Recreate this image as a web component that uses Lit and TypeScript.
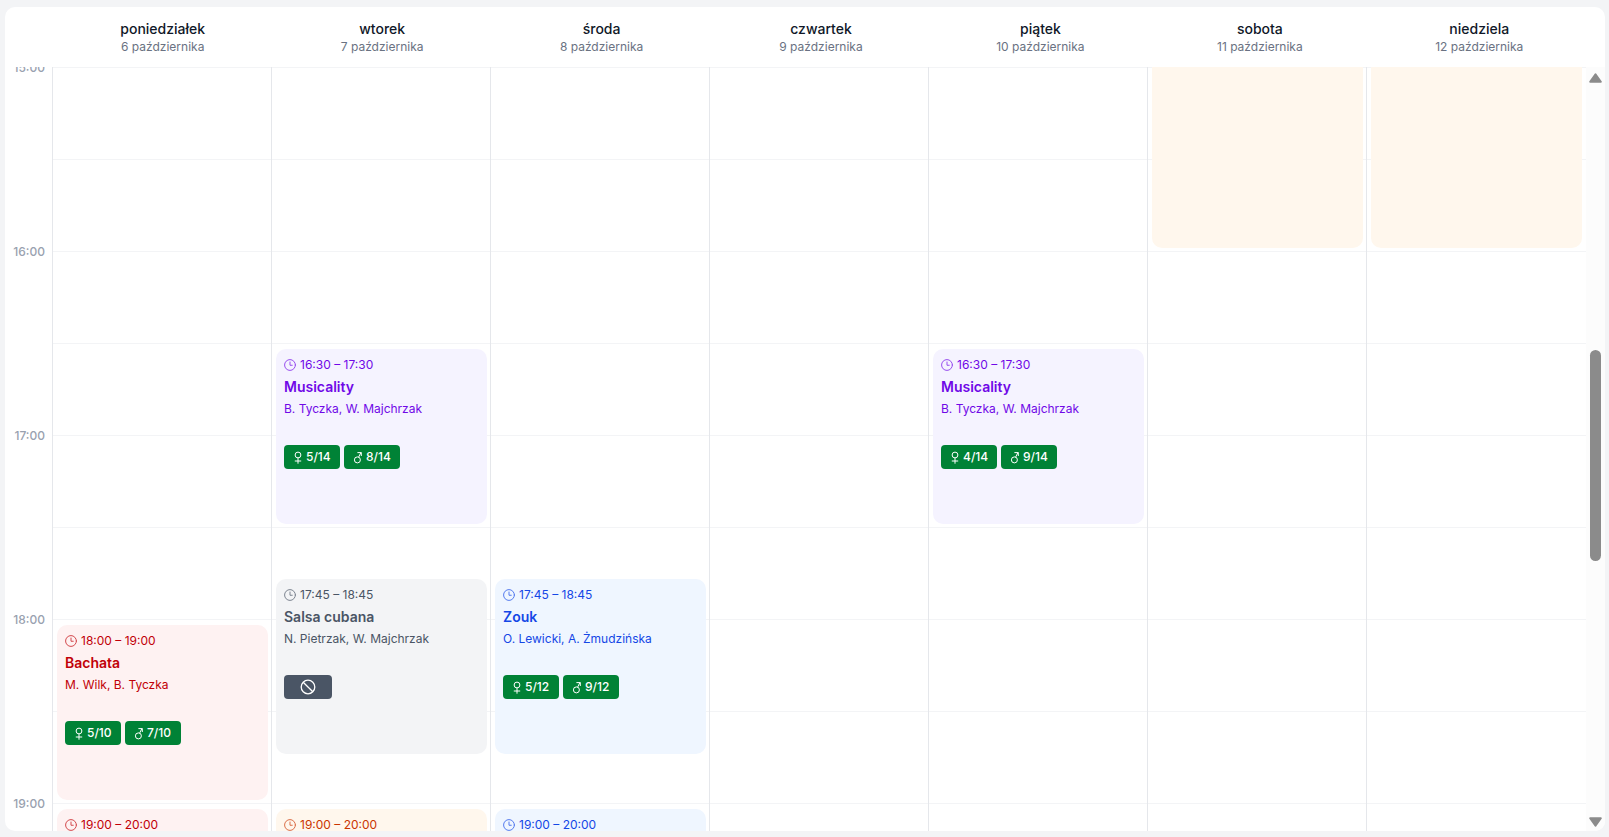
import { LitElement, html, css, svg, nothing } from "lit";
import { customElement, property, query, state } from "lit/decorators.js";
import { classMap } from "lit/directives/class-map.js";
import { styleMap } from "lit/directives/style-map.js";

type Tone = "red" | "violet" | "gray" | "blue" | "orange";

interface Lesson {
  start: string;
  end: string;
  tone: Tone;
  title?: string;
  teachers?: string;
  women?: string;
  men?: string;
  cancelled?: boolean;
}

interface Day {
  name: string;
  date: string;
  lessons: Lesson[];
}

const FIRST_HOUR = 10;
const LAST_HOUR = 24;
const HOUR_HEIGHT = 184;
const OPENING_HOUR = 15;

const HOURS = Array.from({ length: LAST_HOUR - FIRST_HOUR }, (_, i) => FIRST_HOUR + i);

const DAYS: Day[] = [
  {
    name: "poniedziałek",
    date: "6 października",
    lessons: [
      { start: "18:00", end: "19:00", title: "Bachata", teachers: "M. Wilk, B. Tyczka", tone: "red", women: "5/10", men: "7/10" },
      { start: "19:00", end: "20:00", tone: "red" },
    ],
  },
  {
    name: "wtorek",
    date: "7 października",
    lessons: [
      { start: "16:30", end: "17:30", title: "Musicality", teachers: "B. Tyczka, W. Majchrzak", tone: "violet", women: "5/14", men: "8/14" },
      { start: "17:45", end: "18:45", title: "Salsa cubana", teachers: "N. Pietrzak, W. Majchrzak", tone: "gray", cancelled: true },
      { start: "19:00", end: "20:00", tone: "orange" },
    ],
  },
  {
    name: "środa",
    date: "8 października",
    lessons: [
      { start: "17:45", end: "18:45", title: "Zouk", teachers: "O. Lewicki, A. Żmudzińska", tone: "blue", women: "5/12", men: "9/12" },
      { start: "19:00", end: "20:00", tone: "blue" },
    ],
  },
  { name: "czwartek", date: "9 października", lessons: [] },
  {
    name: "piątek",
    date: "10 października",
    lessons: [
      { start: "16:30", end: "17:30", title: "Musicality", teachers: "B. Tyczka, W. Majchrzak", tone: "violet", women: "4/14", men: "9/14" },
    ],
  },
  { name: "sobota", date: "11 października", lessons: [{ start: "13:00", end: "16:00", tone: "orange" }] },
  { name: "niedziela", date: "12 października", lessons: [{ start: "13:00", end: "16:00", tone: "orange" }] },
];

/** Quarters of an hour between the first hour of the grid and a clock time. */
const quartersTo = (time: string): number => {
  const [h, m] = time.split(":").map(Number);
  return (h - FIRST_HOUR) * 4 + m / 15;
};

const female = svg`<circle cx="4" cy="5" r="2.9"/><path d="M4 7.9V13.7M0.8 11H7.2"/>`;
const male = svg`<circle cx="3.4" cy="9.9" r="3"/><path d="M4.6 7.2L7 2.4M3.4 2.6H7.3V6"/>`;

@customElement("lesson-card")
export class LessonCard extends LitElement {
  @property({ attribute: false }) lesson!: Lesson;
  /** False while the top of the card is scrolled out of view. */
  @property({ type: Boolean }) detailed = true;

  static styles = css`
    :host {
      display: block;
      min-width: 0;
    }
    .card {
      box-sizing: border-box;
      height: 100%;
      display: flex;
      flex-direction: column;
      gap: 4px;
      padding: 8px;
      border-radius: 10px;
      overflow: hidden;
    }
    .red { background: #fef2f2; color: #c10007; }
    .violet { background: #f5f3ff; color: #7008e7; }
    .gray { background: #f3f4f6; color: #4a5565; }
    .blue { background: #eff6ff; color: #1447e6; }
    .orange { background: #fff7ed; color: #ca3500; }
    .time {
      display: flex;
      align-items: center;
      gap: 4px;
      font-size: 12px;
      line-height: 16px;
    }
    .clock {
      width: 12px;
      height: 12px;
      flex: none;
      opacity: 0.7;
    }
    .title {
      margin: 0;
      font-size: 14px;
      line-height: 20px;
      font-weight: 600;
    }
    .teachers {
      margin: 0;
      font-size: 12px;
      line-height: 16px;
    }
    .badges {
      display: flex;
      gap: 4px;
      margin-top: 24px;
    }
    .badge {
      box-sizing: border-box;
      display: flex;
      align-items: center;
      gap: 4px;
      min-width: 56px;
      height: 24px;
      padding: 0 8px 0 10px;
      border-radius: 4px;
      background: #008236;
      color: #fff;
      font-size: 12px;
      line-height: 16px;
      font-weight: 500;
    }
    .closed {
      min-width: 48px;
      padding: 0 8px;
      justify-content: center;
      background: #4a5565;
    }
    .sex {
      width: 8px;
      height: 14px;
      flex: none;
    }
    .ban {
      width: 16px;
      height: 16px;
    }
  `;

  private badge(icon: unknown, label: string, count?: string) {
    if (!count) return nothing;
    return html`<span class="badge">
      <svg class="sex" viewBox="0 0 8 14" fill="none" stroke="currentColor" role="img" aria-label=${label}>${icon}</svg>
      <span>${count}</span>
    </span>`;
  }

  private details() {
    const l = this.lesson;
    return html`
      <div class="time">
        <svg class="clock" viewBox="0 0 24 24" fill="none" stroke="currentColor" stroke-width="2" stroke-linecap="round" stroke-linejoin="round" aria-hidden="true">
          <circle cx="12" cy="12" r="10.8" /><path d="M12 6v6.5h4.5" />
        </svg>
        <span>${l.start} – ${l.end}</span>
      </div>
      ${l.title ? html`<h3 class="title">${l.title}</h3>` : nothing}
      ${l.teachers ? html`<p class="teachers">${l.teachers}</p>` : nothing}
      <div class="badges">
        ${l.cancelled
          ? html`<span class="badge closed">
              <svg class="ban" viewBox="0 0 16 16" fill="none" stroke="currentColor" stroke-width="1.3" role="img" aria-label="Odwołane">
                <circle cx="8" cy="8" r="6.8" /><path d="M3.2 3.2L12.8 12.8" />
              </svg>
            </span>`
          : html`${this.badge(female, "Kobiety", l.women)}${this.badge(male, "Mężczyźni", l.men)}`}
      </div>
    `;
  }

  render() {
    return html`<article class=${classMap({ card: true, [this.lesson.tone]: true })}>
      ${this.detailed ? this.details() : nothing}
    </article>`;
  }
}

@customElement("app-root")
export class AppRoot extends LitElement {
  @query(".viewport") private viewport!: HTMLElement;
  @state() private before = (OPENING_HOUR - FIRST_HOUR) * HOUR_HEIGHT;
  @state() private visible = 764;
  @state() private after = 892;

  private readonly onResize = () => this.measure();

  static styles = css`
    :host {
      box-sizing: border-box;
      display: block;
      height: 100vh;
      padding: 7px 4px 6px 5px;
      background: #f3f4f6;
      font-family: Inter, "Liberation Sans", sans-serif;
      color: #101828;
    }
    .calendar {
      height: 100%;
      display: flex;
      flex-direction: column;
      background: #fff;
      border-radius: 10px;
      overflow: hidden;
    }
    .head {
      display: grid;
      grid-template-columns: repeat(7, minmax(0, 1fr));
      padding: 12px 16px 12px 48px;
      text-align: center;
    }
    .day-name {
      margin: 0;
      font-size: 14px;
      line-height: 20px;
      font-weight: 500;
    }
    .day-date {
      margin: 0;
      font-size: 12px;
      line-height: 16px;
      color: #6a7282;
    }
    .body {
      flex: 1;
      min-height: 0;
      display: flex;
    }
    .viewport {
      flex: 1;
      min-width: 0;
      display: flex;
      align-items: flex-start;
      overflow-y: auto;
      scrollbar-width: none;
    }
    .hours {
      box-sizing: border-box;
      width: 47px;
      flex: none;
      padding-right: 7px;
      text-align: right;
      font-size: 12px;
      line-height: 16px;
      font-weight: 500;
      color: #99a1af;
    }
    .hour {
      height: 184px;
      display: flow-root;
    }
    .hour-label {
      display: block;
      margin-top: -7px;
    }
    .week {
      flex: 1;
      min-width: 0;
      display: grid;
      grid-template-columns: repeat(7, minmax(0, 1fr));
      padding-right: 1px;
      background: repeating-linear-gradient(#f3f4f6 0 1px, transparent 1px 92px);
    }
    .day {
      display: grid;
      grid-template-columns: minmax(0, 1fr);
      grid-template-rows: repeat(56, 46px);
      border-left: 1px solid #e5e7eb;
    }
    .lesson {
      margin: 6px 3px 3px 4px;
    }
    .scrollbar {
      width: 19px;
      flex: none;
      display: flex;
      flex-direction: column;
      align-items: center;
      background: #fcfcfc;
    }
    .arrow {
      width: 19px;
      height: 29px;
      flex: none;
      display: flex;
      justify-content: center;
      align-items: flex-start;
      border: 0;
      padding: 6px 0 4px;
      background: none;
      color: #8b8b8b;
    }
    .down {
      height: 24px;
      align-items: flex-end;
    }
    .triangle {
      width: 13px;
      height: 10px;
      display: block;
    }
    .track {
      flex: 1;
      min-height: 0;
      display: flex;
      flex-direction: column;
    }
    .thumb {
      width: 11px;
      border-radius: 6px;
      background: #8b8b8b;
    }
  `;

  connectedCallback() {
    super.connectedCallback();
    window.addEventListener("resize", this.onResize);
  }

  disconnectedCallback() {
    window.removeEventListener("resize", this.onResize);
    super.disconnectedCallback();
  }

  async firstUpdated() {
    this.viewport.scrollTop = (OPENING_HOUR - FIRST_HOUR) * HOUR_HEIGHT;
    await Promise.resolve();
    this.measure();
  }

  private measure() {
    const v = this.viewport;
    this.before = v.scrollTop;
    this.visible = v.clientHeight;
    this.after = Math.max(0, v.scrollHeight - v.clientHeight - v.scrollTop);
  }

  private scrollHours(step: number) {
    this.viewport.scrollBy({ top: step * HOUR_HEIGHT });
  }

  /** Whether a text that starts this many quarters down the grid is in view. */
  private inView(quarters: number): boolean {
    const y = (quarters * HOUR_HEIGHT) / 4;
    return y > this.before - HOUR_HEIGHT / 2 && y < this.before + this.visible;
  }

  render() {
    return html`
      <main class="calendar">
        <header class="head">
          ${DAYS.map(
            (d) => html`<div>
              <h2 class="day-name">${d.name}</h2>
              <p class="day-date">${d.date}</p>
            </div>`
          )}
        </header>
        <div class="body">
          <div class="viewport" @scroll=${this.measure}>
            <div class="hours">
              ${HOURS.map(
                (h, i) => html`<div class="hour">
                  ${this.inView(i * 4) ? html`<span class="hour-label">${h}:00</span>` : nothing}
                </div>`
              )}
            </div>
            <div class="week">
              ${DAYS.map(
                (d) => html`<section class="day" aria-label=${d.name}>
                  ${d.lessons.map(
                    (l) => html`<lesson-card
                      class="lesson"
                      .lesson=${l}
                      .detailed=${this.inView(quartersTo(l.start))}
                      style=${styleMap({ gridRow: `${quartersTo(l.start) + 1} / ${quartersTo(l.end) + 1}` })}
                    ></lesson-card>`
                  )}
                </section>`
              )}
            </div>
          </div>
          <div class="scrollbar">
            <button class="arrow" type="button" aria-label="Przewiń w górę" @click=${() => this.scrollHours(-1)}>
              <svg class="triangle" viewBox="0 0 13 10" aria-hidden="true">
                <path d="M6.5 1.2L11.8 8.8H1.2Z" fill="currentColor" stroke="currentColor" stroke-width="2" stroke-linejoin="round" />
              </svg>
            </button>
            <div class="track">
              <div style=${styleMap({ flexGrow: String(this.before) })}></div>
              <div class="thumb" style=${styleMap({ flexGrow: String(this.visible) })}></div>
              <div style=${styleMap({ flexGrow: String(this.after) })}></div>
            </div>
            <button class="arrow down" type="button" aria-label="Przewiń w dół" @click=${() => this.scrollHours(1)}>
              <svg class="triangle" viewBox="0 0 13 10" aria-hidden="true">
                <path d="M6.5 8.8L11.8 1.2H1.2Z" fill="currentColor" stroke="currentColor" stroke-width="2" stroke-linejoin="round" />
              </svg>
            </button>
          </div>
        </div>
      </main>
    `;
  }
}
